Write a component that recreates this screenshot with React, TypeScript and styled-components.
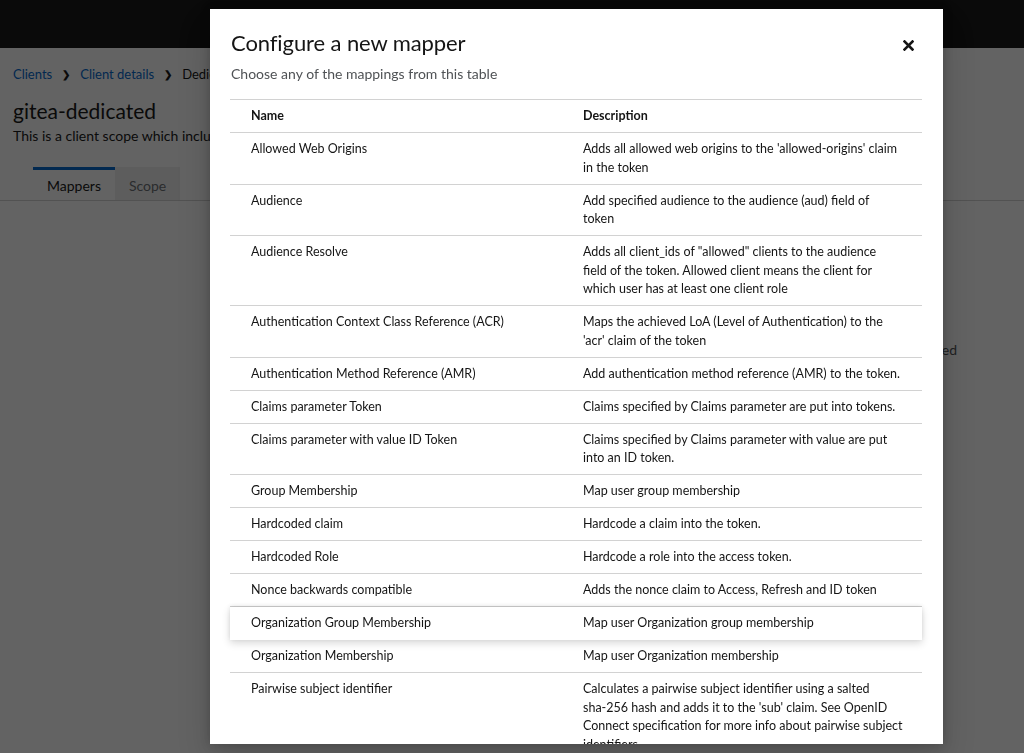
import * as React from 'react';
import styled, { createGlobalStyle } from 'styled-components';

const GlobalStyle = createGlobalStyle`
  html, body {
    margin: 0;
    padding: 0;
    height: 100%;
    overflow: hidden;
  }
  body {
    font-family: Lato, "Liberation Sans", sans-serif;
    color: #151515;
    background: #fff;
  }
`;

type Mapper = { name: string; description: string };

const mappers: Mapper[] = [
  { name: 'Allowed Web Origins', description: "Adds all allowed web origins to the 'allowed-origins' claim in the token" },
  { name: 'Audience', description: 'Add specified audience to the audience (aud) field of token' },
  {
    name: 'Audience Resolve',
    description:
      'Adds all client_ids of "allowed" clients to the audience field of the token. Allowed client means the client for which user has at least one client role',
  },
  {
    name: 'Authentication Context Class Reference (ACR)',
    description: "Maps the achieved LoA (Level of Authentication) to the 'acr' claim of the token",
  },
  { name: 'Authentication Method Reference (AMR)', description: 'Add authentication method reference (AMR) to the token.' },
  { name: 'Claims parameter Token', description: 'Claims specified by Claims parameter are put into tokens.' },
  {
    name: 'Claims parameter with value ID Token',
    description: 'Claims specified by Claims parameter with value are put into an ID token.',
  },
  { name: 'Group Membership', description: 'Map user group membership' },
  { name: 'Hardcoded claim', description: 'Hardcode a claim into the token.' },
  { name: 'Hardcoded Role', description: 'Hardcode a role into the access token.' },
  { name: 'Nonce backwards compatible', description: 'Adds the nonce claim to Access, Refresh and ID token' },
  { name: 'Organization Group Membership', description: 'Map user Organization group membership' },
  { name: 'Organization Membership', description: 'Map user Organization membership' },
  {
    name: 'Pairwise subject identifier',
    description:
      "Calculates a pairwise subject identifier using a salted sha\u2011256 hash and adds it to the 'sub' claim. See OpenID Connect specification for more info about pairwise subject identifiers.",
  },
  { name: 'Role Name Mapper', description: 'Map an assigned role to a new name or position in the token.' },
];

const HOVERED = 'Organization Group Membership';

/* ---------- page behind the modal ---------- */

const Page = styled.div`
  min-height: 100vh;
  display: flex;
  flex-direction: column;
`;

const Masthead = styled.header`
  height: 48px;
  background: #151515;
`;

const HeaderSection = styled.section`
  padding: 17px 13px 0;
  display: flex;
  flex-direction: column;
`;

const Breadcrumb = styled.nav`
  display: flex;
  align-items: center;
  gap: 10px;
  font-size: 13px;
  line-height: 18px;
`;

const Crumb = styled.a<{ $current?: boolean }>`
  color: ${(p) => (p.$current ? '#151515' : '#0066cc')};
  text-decoration: none;
`;

const Chevron = styled.span`
  font-size: 10px;
  font-weight: 700;
  color: #151515;
`;

const PageTitle = styled.h1`
  margin: 15px 0 0;
  font-size: 21px;
  font-weight: 400;
  line-height: 26px;
`;

const PageSubtitle = styled.p`
  margin: 2px 0 0;
  font-size: 14px;
  line-height: 20px;
`;

const Tabs = styled.div`
  display: flex;
  margin: 21px 0 0 20px;
`;

const Tab = styled.div<{ $active?: boolean }>`
  padding: 7px 14px 6px;
  font-size: 14px;
  line-height: 18px;
  color: ${(p) => (p.$active ? '#151515' : '#6a6e73')};
  background: ${(p) => (p.$active ? '#fff' : '#f0f0f0')};
  border-top: 3px solid ${(p) => (p.$active ? '#0066cc' : 'transparent')};
`;

const Content = styled.main`
  flex: 1;
  background: #fff;
  border-top: 1px solid #d2d2d2;
  margin-top: -1px;
`;

const EmptyState = styled.div`
  padding: 139px 67px 0 0;
  display: flex;
  justify-content: flex-end;
`;

const EmptyBody = styled.p`
  margin: 0;
  font-size: 14px;
  line-height: 20px;
  color: #4f5255;
`;

/* ---------- modal ---------- */

const Backdrop = styled.div`
  position: fixed;
  inset: 0;
  background: rgba(3, 3, 3, 0.62);
`;

const ModalBox = styled.div`
  position: fixed;
  left: 210px;
  top: 9px;
  bottom: 9px;
  width: 733px;
  background: #fff;
  box-shadow: 0 16px 32px rgba(3, 3, 3, 0.16), 0 0 10px rgba(3, 3, 3, 0.2);
  display: flex;
  flex-direction: column;
  overflow: hidden;
`;

const ModalHeader = styled.div`
  display: flex;
  align-items: flex-start;
  justify-content: space-between;
  padding: 20px 23px 0 21px;
`;

const TitleGroup = styled.div`
  display: flex;
  flex-direction: column;
`;

const ModalTitle = styled.h1`
  margin: 0;
  font-size: 22px;
  font-weight: 400;
  line-height: 28px;
  letter-spacing: -0.1px;
`;

const ModalDescription = styled.p`
  margin: 7px 0 0;
  font-size: 14px;
  line-height: 20px;
  color: #4f5255;
`;

const CloseButton = styled.button`
  margin-top: 4px;
  width: 24px;
  height: 24px;
  padding: 0;
  border: none;
  background: none;
  display: flex;
  align-items: center;
  justify-content: center;
  color: #151515;
  cursor: pointer;
`;

const ModalBody = styled.div`
  flex: 1;
  overflow: hidden;
  padding: 15px 21px 0 20px;
`;

const Table = styled.div`
  display: flex;
  flex-direction: column;
  border-top: 1px solid #d2d2d2;
  font-size: 12.5px;
  line-height: 18.5px;
`;

const Row = styled.div<{ $head?: boolean; $hover?: boolean }>`
  position: relative;
  display: grid;
  grid-template-columns: 353px 1fr;
  padding: 7px 0 6.5px;
  border-bottom: 1px solid ${(p) => (p.$hover ? 'transparent' : '#d2d2d2')};
  font-weight: ${(p) => (p.$head ? 700 : 400)};
  background: #fff;
  box-shadow: ${(p) => (p.$hover ? '0 3px 8px rgba(3, 3, 3, 0.16), 0 -1px 4px rgba(3, 3, 3, 0.08)' : 'none')};
  z-index: ${(p) => (p.$hover ? 1 : 0)};
`;

const NameCell = styled.div`
  padding-left: 21px;
  padding-right: 16px;
`;

const DescCell = styled.div`
  padding-right: 19.5px;
`;

const CloseIcon = () => (
  <svg width="11" height="11" viewBox="0 0 11 11" aria-hidden="true">
    <path d="M1.5 1.5 L9.5 9.5 M9.5 1.5 L1.5 9.5" stroke="currentColor" strokeWidth="2.6" strokeLinecap="square" />
  </svg>
);

export default function App() {
  return (
    <>
      <GlobalStyle />
      <Page>
        <Masthead />
        <HeaderSection>
          <Breadcrumb>
            <Crumb href="#">Clients</Crumb>
            <Chevron>&#x276F;</Chevron>
            <Crumb href="#">Client details</Crumb>
            <Chevron>&#x276F;</Chevron>
            <Crumb $current>Dedicated scopes</Crumb>
          </Breadcrumb>
          <PageTitle>gitea-dedicated</PageTitle>
          <PageSubtitle>
            This is a client scope which includes dedicated mappers and scope
          </PageSubtitle>
          <Tabs>
            <Tab $active>Mappers</Tab>
            <Tab>Scope</Tab>
          </Tabs>
        </HeaderSection>
        <Content>
          <EmptyState>
            <EmptyBody>No mappers have been configured</EmptyBody>
          </EmptyState>
        </Content>
      </Page>

      <Backdrop />
      <ModalBox role="dialog" aria-modal="true">
        <ModalHeader>
          <TitleGroup>
            <ModalTitle>Configure a new mapper</ModalTitle>
            <ModalDescription>Choose any of the mappings from this table</ModalDescription>
          </TitleGroup>
          <CloseButton aria-label="Close">
            <CloseIcon />
          </CloseButton>
        </ModalHeader>
        <ModalBody>
          <Table>
            <Row $head>
              <NameCell>Name</NameCell>
              <DescCell>Description</DescCell>
            </Row>
            {mappers.map((m) => (
              <Row key={m.name} $hover={m.name === HOVERED}>
                <NameCell>{m.name}</NameCell>
                <DescCell>{m.description}</DescCell>
              </Row>
            ))}
          </Table>
        </ModalBody>
      </ModalBox>
    </>
  );
}
